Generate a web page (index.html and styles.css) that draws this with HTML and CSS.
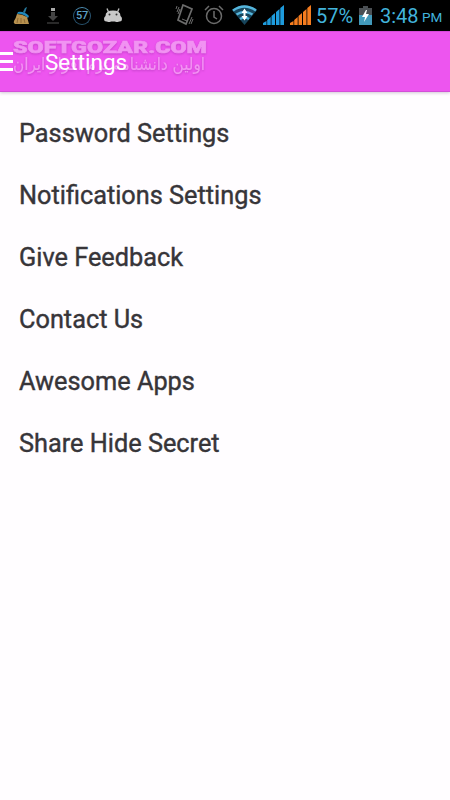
FILE: index.html
```html
<!DOCTYPE html>
<html lang="en">
<head>
<meta charset="utf-8">
<title>Settings</title>
<link rel="stylesheet" href="styles.css">
</head>
<body>
<div class="status">
  <svg class="broom" width="19" height="18" viewBox="0 0 19 18"><path d="M12 1l2-1-2 6-2-1z" fill="#27799d"/><path d="M5 5q6-1 11 4l-1 2Q9 6 4 7z" fill="#2089bd"/><path d="M4 7q5 0 10 3l2 7H2q-2-1-1-3 2-3 3-7z" fill="#b7914f"/><path d="M5 11l-1 5m4-5v5m3-4l1 4" stroke="#8d6935"/></svg>
  <svg class="download" width="14" height="18" viewBox="0 0 14 18"><path d="M5 1h4v3H5z" fill="#aaa"/><path d="M5 5h4v4h3l-5 5-5-5h3z" fill="#444"/><path d="M1 15h12v2H1z" fill="#292929"/></svg>
  <div class="cleaner">57</div>
  <svg class="android" width="20" height="15" viewBox="0 0 20 15"><path d="M5.500 4L4 .5m10.500 3.500L16 .5" stroke="#bbb" stroke-width="1.4"/><path d="M2.500 8Q2.500 2.500 10 2.500T17.500 8q1.500 1 1.500 3 0 3-3 2.500-2 1-4 0H8q-2 1-4 0-3 .5-3-2.500 0-2 1.500-3z" fill="#c9c9c9"/><circle cx="6.500" cy="6.500" r="1" fill="#333"/><circle cx="13.500" cy="6.500" r="1" fill="#333"/></svg>
  <svg class="vibrate" width="20" height="22" viewBox="0 0 20 22" fill="none" stroke="#6c6c6c"><path d="M8 1l9 4-6 15-8-4z" stroke-width="1.7"/><path d="M7 15l5 2M4 3L2 8m3-3L3 10m14 3l-3 7m4-5l-2 5M1 5l1-3" /></svg>
  <svg class="alarm" width="20" height="20" viewBox="0 0 20 20" fill="none" stroke="#6c6c6c" stroke-width="1.5"><circle cx="10" cy="11" r="7.5"/><path d="M10 6v6l3 2M1 5l4-4m14 4l-4-4"/></svg>
  <svg class="wifi" width="25" height="20" viewBox="0 0 25 20"><path d="M0 5Q12-4 25 5L12.5 20z" fill="#17455c"/><path d="M1 5.500Q12.500-2.500 24 5.500M4.500 9.500q8-5 16 0M8 14q4.500-3 9 0" fill="none" stroke="#55b5dc" stroke-width="2.400"/><path d="M12.500 3.500L15.500 8h-2v3h2l-3 4.500-3-4.500h2V8h-2z" fill="#fff"/></svg>
  <svg class="signal blue" width="21" height="20" viewBox="0 0 21 20"><path d="M0 20v-2l3.500-2v4zm4.200 0v-5l3.500-3v8zM8.500 20v-9L12 8v12zm4.500 0V7l3.500-3v16zM17.300 20V3L21 0v20z"/></svg>
  <svg class="signal orange" width="21" height="20" viewBox="0 0 21 20"><path d="M0 20v-2l3.500-2v4zm4.200 0v-5l3.500-3v8zM8.500 20v-9L12 8v12zm4.500 0V7l3.500-3v16zM17.300 20V3L21 0v20z"/></svg>
  <span class="percent">57%</span>
  <svg class="battery" width="13" height="19" viewBox="0 0 13 19"><path d="M4 0h5v2h4v7H0V2h4z" fill="#4b5054"/><path d="M0 9h13v10H0z" fill="#4299ba"/><path d="M7 4L3 11h3l-1 5 5-8H7l1-4z" fill="#fff"/></svg>
  <span class="time">3:48</span><span class="pm">PM</span>
</div>
<header class="bar">
  <div class="mark">
    <svg width="196" height="18" viewBox="0 0 196 18"><text x="1" y="15" textLength="194" lengthAdjust="spacingAndGlyphs">SOFTGOZAR.COM</text></svg>
    <svg width="196" height="24" viewBox="0 0 196 24"><text class="fa" x="193" y="14" direction="rtl" textLength="192" lengthAdjust="spacingAndGlyphs">اولین دانشنامه نرم افزار ایران</text></svg>
  </div>
  <div class="menu"><i></i><i></i><i></i></div>
  <h1>Settings</h1>
</header>
<ul class="list">
  <li>Password Settings</li>
  <li>Notifications Settings</li>
  <li>Give Feedback</li>
  <li>Contact Us</li>
  <li>Awesome Apps</li>
  <li>Share Hide Secret</li>
</ul>
</body>
</html>
```
FILE: styles.css
```css
* { box-sizing: border-box; }
body { margin: 0; width: 450px; height: 800px; overflow: hidden; background: #fffdff; font-family: Roboto, "Noto Sans", sans-serif; }
.status { height: 31px; background: #000; display: flex; align-items: flex-start; color: #42b4dc; white-space: nowrap; }
.status > * { flex: none; }
.broom { margin: 7px 0 0 13px; }
.download { margin: 7px 0 0 14px; }
.cleaner { width: 18px; height: 18px; margin: 7px 0 0 13px; border: 1.5px solid #28536f; border-top-color: #4d8fb5; border-radius: 50%; font-size: 11px; font-weight: 500; line-height: 16px; letter-spacing: -.3px; text-align: center; color: #5ea3c9; }
.android { margin: 8px 0 0 12px; }
.vibrate { margin: 4px 0 0 52px; }
.alarm { margin: 5px 0 0 9px; }
.wifi { margin: 5px 0 0 8px; }
.signal { margin: 5px 0 0 6px; }
.blue { fill: #1e9bdc; }
.orange { fill: #f57c1f; }
.percent { width: 37px; margin: 4px 0 0 5px; font-size: 20px; line-height: 24px; }
.battery { margin: 6px 0 0 6px; }
.time { width: 39px; margin: 4px 0 0 8px; font-size: 20px; line-height: 24px; }
.pm { margin: 7px 0 0 3px; font-size: 13.500px; line-height: 20px; }
.bar { position: relative; height: 61px; background: #ed55ef; border-top: 1px solid #d849dc; border-bottom: 1px solid #d34fd8; box-shadow: 0 1px 3px rgba(80, 40, 90, .25); display: flex; align-items: center; }
.menu { position: relative; width: 13px; display: grid; gap: 5px; }
.menu i { height: 3px; background: #fff; }
h1 { position: relative; margin: 0 0 0 32px; color: #fff; font-size: 22.500px; font-weight: 400; line-height: 30px; }
.mark { position: absolute; left: 12px; top: 6px; }
.mark svg { display: block; overflow: visible; filter: drop-shadow(0 1px 1px rgba(130, 30, 140, .35)); }
.mark text { fill: #f193f2; stroke: #f193f2; stroke-width: .6px; font: 900 17px Roboto, sans-serif; }
.mark .fa { fill: #f393f3; stroke-width: .2px; font: 400 17px "DejaVu Sans", sans-serif; }
.list { list-style: none; margin: 0; padding: 11px 19px; }
.list li { height: 62px; line-height: 62px; font-size: 25.300px; font-weight: 400; -webkit-text-stroke: .4px #373539; color: #373539; }
```
